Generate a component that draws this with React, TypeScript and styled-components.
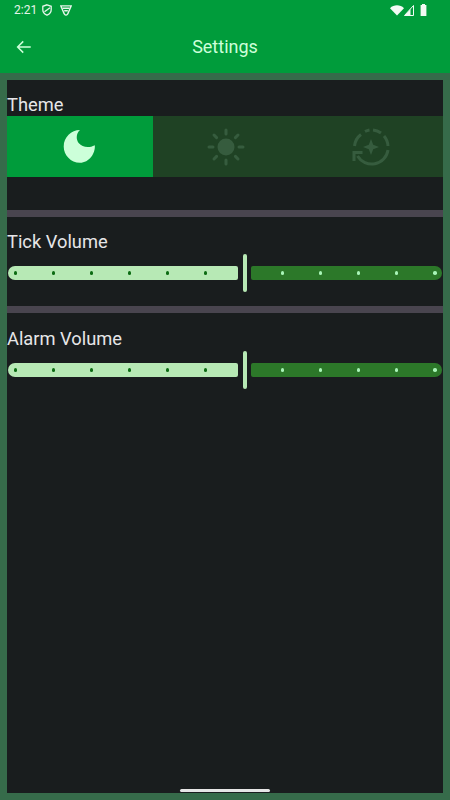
import styled, { createGlobalStyle } from "styled-components";

const GlobalStyle = createGlobalStyle`
  html, body {
    margin: 0;
    padding: 0;
    background: #366b4a;
  }
  * {
    box-sizing: border-box;
  }
`;

const Page = styled.div`
  position: relative;
  width: 450px;
  height: 800px;
  display: flex;
  flex-direction: column;
  background: #366b4a;
  font-family: Roboto, "Liberation Sans", sans-serif;
  overflow: hidden;
`;

const Header = styled.div`
  height: 73px;
  flex: none;
  background: #009c3b;
  display: flex;
  flex-direction: column;
`;

const StatusBar = styled.div`
  height: 20px;
  display: flex;
  align-items: center;
  padding: 0 23px 0 14px;
  color: #e6f5ea;
  font-size: 12px;
  line-height: 20px;

  > .time {
    margin-right: 5px;
  }

  > .spacer {
    flex: 1;
  }

  > svg {
    display: block;
  }
`;

const AppBar = styled.div`
  flex: 1;
  display: flex;
  align-items: center;
  padding: 0 0 0 15px;
  color: #ccffd9;

  > .title {
    flex: 1;
    padding-right: 33px;
    text-align: center;
    font-size: 18px;
    line-height: 24px;
  }
`;

const Content = styled.div`
  flex: 1;
  margin: 7px;
  background: #191d1e;
  display: flex;
  flex-direction: column;
`;

const Section = styled.div<{ $height: number }>`
  height: ${(p) => p.$height}px;
  flex: none;
`;

const Label = styled.div<{ $top: number }>`
  padding-top: ${(p) => p.$top}px;
  font-size: 18.3px;
  line-height: 24px;
  color: #e6e6e8;
`;

const Divider = styled.div`
  height: 7px;
  flex: none;
  background: #49454f;
`;

const Segments = styled.div`
  display: flex;
  height: 61px;
  margin-top: -1px;
`;

const Segment = styled.div<{ $active?: boolean }>`
  flex: ${(p) => (p.$active ? "0 0 146px" : "1")};
  display: flex;
  align-items: center;
  justify-content: center;
  background: ${(p) => (p.$active ? "#009c3b" : "#1f4224")};
  color: ${(p) => (p.$active ? "#ccffd9" : "#365c3e")};
`;

const Slider = styled.div`
  display: flex;
  align-items: center;
  height: 38px;
  padding: 0 1px;
`;

const Track = styled.div<{ $active?: boolean }>`
  height: 14px;
  display: flex;
  align-items: center;
  justify-content: space-between;
  background: ${(p) => (p.$active ? "#b7e9b5" : "#2c7829")};
  border-radius: ${(p) => (p.$active ? "7px 2px 2px 7px" : "2px 7px 7px 2px")};
  width: ${(p) => (p.$active ? "230px" : "191px")};
  padding: ${(p) => (p.$active ? "0 31px 0 5.5px" : "0 5.5px 0 29.5px")};
`;

const Stop = styled.span<{ $active?: boolean }>`
  width: ${(p) => (p.$active ? "3.5px" : "3.5px")};
  height: ${(p) => (p.$active ? "3.5px" : "3.5px")};
  border-radius: 50%;
  background: ${(p) => (p.$active ? "#0b6b12" : "#a9f5b8")};
`;

const Handle = styled.div`
  width: 4px;
  height: 38px;
  margin: 0 4px 0 5px;
  border-radius: 2px;
  background: #b7e9b5;
`;

const GestureBar = styled.div`
  position: absolute;
  left: 180px;
  bottom: 8px;
  width: 90px;
  height: 3px;
  border-radius: 2px;
  background: #e6e6e6;
`;

const Dots = ({ count, active }: { count: number; active?: boolean }) => (
  <>
    {Array.from({ length: count }).map((_, i) => (
      <Stop key={i} $active={active} />
    ))}
  </>
);

const VolumeSlider = () => (
  <Slider>
    <Track $active>
      <Dots count={6} active />
    </Track>
    <Handle />
    <Track>
      <Dots count={5} />
    </Track>
  </Slider>
);

function App() {
  return (
    <Page>
      <GlobalStyle />
      <Header>
        <StatusBar>
          <span className="time">2:21</span>
          <svg width="10" height="12" viewBox="0 0 10 12" fill="none" stroke="#e6f5ea" strokeWidth="1.3" style={{ marginRight: 8 }}>
            <path d="M5 0.8 L9.2 2.3 V5.8 C9.2 8.3 7.4 10.2 5 11.2 C2.6 10.2 0.8 8.3 0.8 5.8 V2.3 Z" />
            <path d="M2.5 7.8 L8 3.8" />
          </svg>
          <svg width="12" height="11" viewBox="0 0 12 11" fill="none" stroke="#e6f5ea" strokeWidth="1.4">
            <path d="M0.8 0.9 H11.2 L8.8 6.5 C8 9 7 10.1 6 10.1 C5 10.1 4 9 3.2 6.5 Z" />
            <path d="M2.5 3.2 H9.5 M4.2 5.8 H7.8" />
          </svg>
          <span className="spacer" />
          <svg width="14" height="11" viewBox="0 0 14 11" fill="#f2fbf4">
            <path d="M0 3.2 C3.8 -0.6 10.2 -0.6 14 3.2 L7 10.5 Z" />
          </svg>
          <svg width="10" height="11" viewBox="0 0 10 11" style={{ marginRight: 6 }}>
            <path d="M9.5 0.5 V10.5 H0.5 Z" fill="none" stroke="#f2fbf4" />
            <path d="M6.5 4 V10.5 H0.5 Z" fill="#f2fbf4" />
          </svg>
          <svg width="7" height="12" viewBox="0 0 7 12" fill="#f2fbf4">
            <path d="M2 0 H5 V1 H6.4 V12 H0.6 V1 H2 Z" />
          </svg>
        </StatusBar>
        <AppBar>
          <svg width="18" height="18" viewBox="0 0 24 24" fill="none" stroke="#ccffd9" strokeWidth="2">
            <path d="M21 12 H4 M11 4.5 L3.5 12 L11 19.5" />
          </svg>
          <div className="title">Settings</div>
        </AppBar>
      </Header>
      <Content>
        <Section $height={130}>
          <Label $top={13}>Theme</Label>
          <Segments>
            <Segment $active>
              <svg width="39" height="39" viewBox="0 0 36 36" fill="currentColor">
                <path d="M17.5 2.8 C13.5 6.5 14 12 16.5 15 C19.5 18.5 25.5 19.8 31.2 16.8 C32 24 26 33 17.5 33 C9 33 2.5 26 2.5 18 C2.5 9.5 9.5 2.8 17.5 2.8 Z" />
              </svg>
            </Segment>
            <Segment>
              <svg width="38" height="38" viewBox="0 0 38 38" fill="none" stroke="currentColor" strokeWidth="3" strokeLinecap="round">
                <circle cx="19" cy="19" r="8.5" fill="currentColor" stroke="none" />
                <path d="M19 2 V6 M19 32 V36 M2 19 H6 M32 19 H36 M7 7 L9.6 9.6 M28.4 28.4 L31 31 M7 31 L9.6 28.4 M28.4 9.6 L31 7" />
              </svg>
            </Segment>
            <Segment>
              <svg width="38" height="38" viewBox="0 0 38 38" fill="none" stroke="currentColor" strokeWidth="3">
                <path d="M2.5 18 A16.5 16.5 0 0 1 9 6.5 M13 3.5 A16.5 16.5 0 0 1 17.5 2 M21 2 A16.5 16.5 0 0 1 29 5 M32 8 A16.5 16.5 0 0 1 36 18" />
                <path d="M36 22 A16.5 16.5 0 0 1 5.5 28" />
                <path d="M2 33 V24.5 H10.5" />
                <path d="M19 11 L21.2 16.8 L27 19 L21.2 21.2 L19 27 L16.8 21.2 L11 19 L16.8 16.8 Z" fill="currentColor" stroke="none" />
              </svg>
            </Segment>
          </Segments>
        </Section>
        <Divider />
        <Section $height={89}>
          <Label $top={13}>Tick Volume</Label>
          <VolumeSlider />
        </Section>
        <Divider />
        <Section $height={89}>
          <Label $top={14}>Alarm Volume</Label>
          <VolumeSlider />
        </Section>
      </Content>
      <GestureBar />
    </Page>
  );
}

export default App;
